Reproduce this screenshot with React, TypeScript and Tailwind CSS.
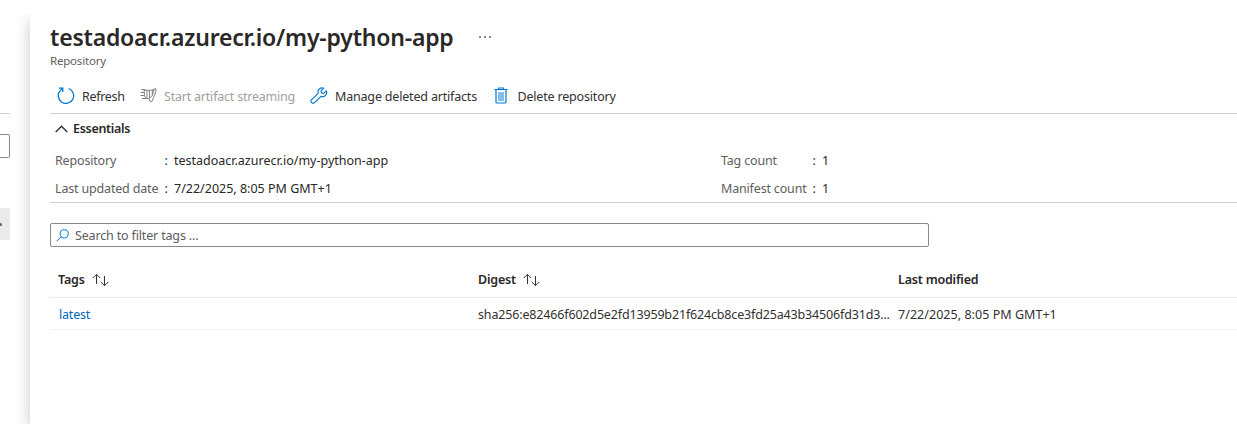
import type { ReactNode } from "react";

function RefreshIcon() {
  return (
    <svg width="18" height="18" viewBox="0 0 18 18" fill="none" stroke="#0078d4" strokeWidth="1.25">
      <path d="M11.6 1.5A7.7 7.7 0 1 1 3.4 3.4L5.4 1.5" />
      <path d="M1.8 1H5.8V5" />
    </svg>
  );
}

function StreamIcon() {
  return (
    <svg width="18" height="18" viewBox="0 0 18 18" fill="none" stroke="#858381" strokeWidth="1">
      <path d="M1.5 2.5H5M0.5 5.5H4M0.5 8.5H4M2 11.5H6" />
      <path d="M4 3.2H11.5L15.8 1.5V5L11.8 14.7H10.2L8.8 11.5H6.5L4.8 9.5ZM7 3.2V11M9.5 3.2V11.2M12.3 3V8.5L9.5 11.2M14 2.5L12.3 8.5" />
    </svg>
  );
}

function WrenchIcon() {
  return (
    <svg width="18" height="18" viewBox="0 0 18 18" fill="none" stroke="#0078d4" strokeWidth="1.15" strokeLinejoin="round">
      <path d="M13.8 1.2A4.2 4.2 0 0 0 8.2 6.4L1.6 12.7A2 2 0 0 0 4.6 15.7L11 9.4A4.2 4.2 0 0 0 16.3 3.8L13.6 6.4L11.5 5.9L11 3.9Z" />
    </svg>
  );
}

function TrashIcon() {
  return (
    <svg width="14" height="18" viewBox="0 0 14 18" fill="none" stroke="#0078d4">
      <path d="M4.5 2.5V1H9.5V2.5M0.5 2.5H13.5" strokeWidth="1.1" />
      <path d="M2 3V15Q2 16 3 16H11Q12 16 12 15V3" strokeWidth="1.2" />
      <path d="M4 5H10V14H4Z" fill="#83bdeb" stroke="none" />
    </svg>
  );
}

function SortIcon() {
  return (
    <svg width="17" height="14" viewBox="0 0 17 14" fill="none" stroke="#323130" strokeWidth="1">
      <path d="M4.5 11V1.5M0.8 5L4.5 1.3L8.2 5M12.5 3V12.5M8.8 9L12.5 12.7L16.2 9" />
    </svg>
  );
}

function Field({ label, value, gap }: { label: string; value: string; gap: string }) {
  return (
    <div className="flex h-7 items-center">
      <div className={gap}>
        <span className="tracking-[-0.17px]">{label}</span>
      </div>
      <span className="w-[9.5px] text-[#292827]">:</span>
      <span className="text-[#292827]">{value}</span>
    </div>
  );
}

function Heading({ children, className }: { children: ReactNode; className: string }) {
  return <div className={`flex items-center font-semibold tracking-[-0.2px] text-[#292827] ${className}`}>{children}</div>;
}

export default function App() {
  return (
    <div className="flex h-[424px] w-[1237px] overflow-hidden bg-white font-['Noto_Sans','Open_Sans',sans-serif] text-[12.5px] leading-5 whitespace-nowrap">
      <aside className="flex w-[30px] shrink-0 flex-col">
        <div className="h-[114px] w-[10px] border-b border-[#d2d0ce]" />
        <div className="mt-5 h-6 w-[10px] rounded-r-[2px] border border-l-0 border-[#8a8886]" />
        <div className="mt-[50px] flex h-8 w-[10px] items-center bg-[#edebe9]">
          <div className="h-[3px] w-[2px] rounded-r-full bg-[#605e5c]" />
        </div>
      </aside>
      <main className="mt-[14px] flex min-w-0 flex-1 flex-col bg-white pl-5 shadow-[0_6px_14px_rgba(0,0,0,0.22)] [clip-path:inset(0_0_0_-20px)]">
        <div className="flex h-[39px] items-center pt-[6px]">
          <h1 className="w-[429px] text-[23px] leading-8 font-semibold tracking-[-0.2px] text-[#292827]">testadoacr.azurecr.io/my-python-app</h1>
          <div className="flex gap-[3px]">
            <i className="size-[2px] bg-[#8a8886]" />
            <i className="size-[2px] bg-[#8a8886]" />
            <i className="size-[2px] bg-[#8a8886]" />
          </div>
        </div>
        <div className="h-[25px] text-[11.5px] leading-4 tracking-[-0.2px] text-[#605e5c]">Repository</div>
        <div className="flex h-[36px] items-center border-b border-[#d2d0ce] tracking-[-0.18px] text-[#323130]">
          <div className="flex w-[90px] items-center gap-[7px] pl-[7px]">
            <RefreshIcon />
            <span className="pt-[2px] tracking-[-0.3px]">Refresh</span>
          </div>
          <div className="flex w-[170px] items-center gap-[6px] text-[#a19f9d]">
            <StreamIcon />
            <span className="pt-[2px] tracking-[-0.21px]">Start artifact streaming</span>
          </div>
          <div className="flex w-[184px] items-center gap-[7px]">
            <WrenchIcon />
            <span className="pt-[2px]">Manage deleted artifacts</span>
          </div>
          <div className="flex items-center gap-[9.5px]">
            <TrashIcon />
            <span className="pt-[2px]">Delete repository</span>
          </div>
        </div>
        <section className="h-[89px] border-b border-[#d2d0ce] pl-[5px]">
          <div className="flex h-[29px] items-center gap-[5px] font-semibold tracking-[-0.3px] text-[#292827]">
            <svg width="13" height="8" viewBox="0 0 13 8" fill="none" stroke="#323130" strokeWidth="1.4">
              <path d="M0.7 7L6.5 1.2L12.3 7" />
            </svg>
            <span>Essentials</span>
          </div>
          <div className="flex pt-1 text-[#605e5c]">
            <div className="w-[666px]">
              <Field label="Repository" value="testadoacr.azurecr.io/my-python-app" gap="w-[109.5px]" />
              <Field label="Last updated date" value="7/22/2025, 8:05 PM GMT+1" gap="w-[109.5px]" />
            </div>
            <div>
              <Field label="Tag count" value="1" gap="w-[91.5px]" />
              <Field label="Manifest count" value="1" gap="w-[91.5px]" />
            </div>
          </div>
        </section>
        <div className="mt-5 flex h-6 w-[879px] shrink-0 items-center gap-[6px] rounded-[2px] border border-[#8a8886] pl-[5px] text-[#605e5c]">
          <svg width="13" height="13" viewBox="0 0 13 13" fill="none" stroke="#0078d4" strokeWidth="1">
            <circle cx="8.2" cy="4.8" r="4.1" />
            <path d="M5.2 7.7L0.6 12.3" />
          </svg>
          <span className="pt-[2px] tracking-[-0.16px]">Search to filter tags ...</span>
        </div>
        <div className="mt-[15px] flex h-9 shrink-0 border-b border-[#edebe9] pl-2">
          <Heading className="w-[420px] gap-[7.5px]">
            <span>Tags</span>
            <SortIcon />
          </Heading>
          <Heading className="w-[420px] gap-[7.5px]">
            <span>Digest</span>
            <SortIcon />
          </Heading>
          <Heading className="">
            <span>Last modified</span>
          </Heading>
        </div>
        <div className="flex h-8 shrink-0 items-center border-b border-[#f3f2f1] pt-[2px] pl-2 text-[#323130]">
          <div className="w-[420px] pt-px pl-px">
            <a className="tracking-[-0.2px] text-[#0067b8]">latest</a>
          </div>
          <div className="w-[420px] tracking-[-0.16px]">sha256:e82466f602d5e2fd13959b21f624cb8ce3fd25a43b34506fd31d3...</div>
          <div className="tracking-[0.04px]">7/22/2025, 8:05 PM GMT+1</div>
        </div>
      </main>
    </div>
  );
}
